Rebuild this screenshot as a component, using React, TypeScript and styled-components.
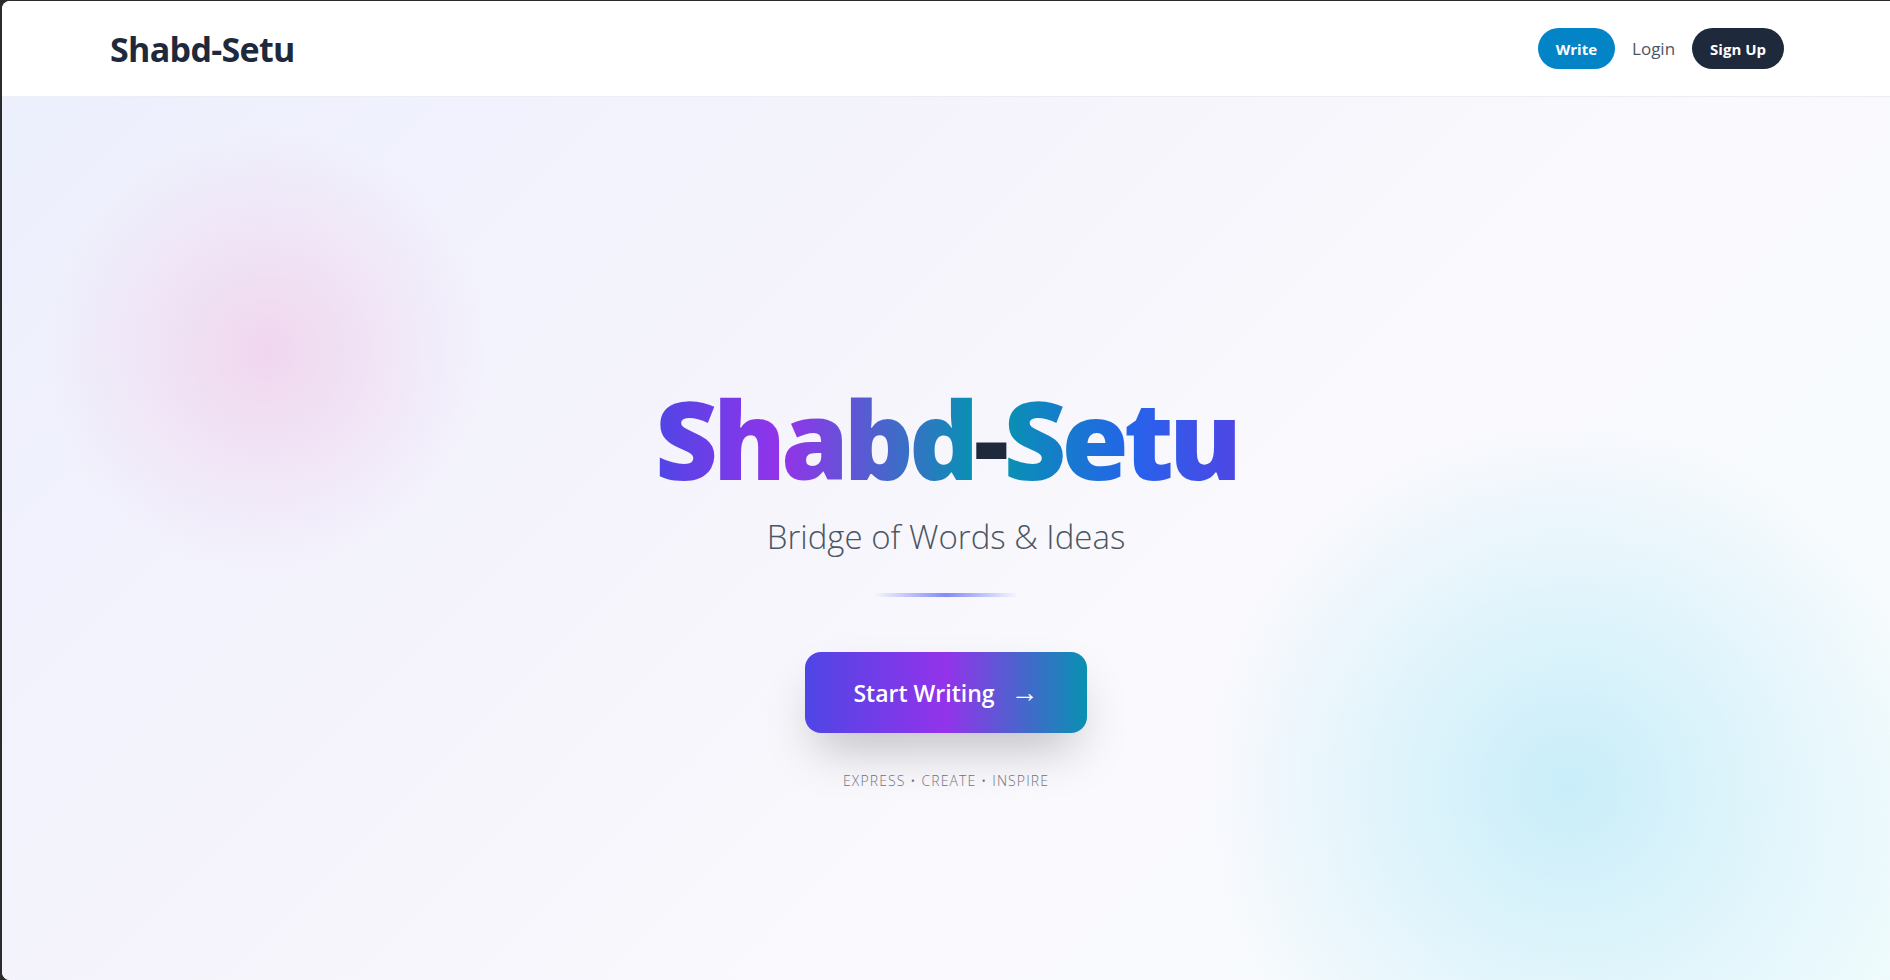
import React from "react";
import styled, { createGlobalStyle } from "styled-components";

const GlobalStyle = createGlobalStyle`
  html, body {
    margin: 0;
    padding: 0;
    height: 100%;
    overflow: hidden;
    background: #2b2b2b;
  }
  body {
    font-family: "Open Sans", "Noto Sans", sans-serif;
  }
  * { box-sizing: border-box; }
`;

const Frame = styled.div`
  margin: 1px 0 0 2px;
  height: 979px;
  border-radius: 8px 0 0 8px;
  overflow: hidden;
  background: #ffffff;
  display: flex;
  flex-direction: column;
`;

const Header = styled.header`
  flex: none;
  height: 96px;
  display: flex;
  align-items: center;
  justify-content: space-between;
  padding: 0 106px 0 108px;
  background: #ffffff;
  border-bottom: 1px solid #eceef3;
  position: relative;
  z-index: 2;
`;

const Logo = styled.div`
  font-family: "Open Sans", sans-serif;
  font-weight: 700;
  font-size: 34px;
  letter-spacing: -0.02em;
  color: #1e293b;
  line-height: 1;
`;

const Nav = styled.nav`
  display: flex;
  align-items: center;
  gap: 17px;
`;

const PillButton = styled.button<{ $bg: string }>`
  height: 41px;
  padding: 0 18px;
  border: none;
  border-radius: 9999px;
  background: ${(p) => p.$bg};
  color: #ffffff;
  font-family: "Open Sans", sans-serif;
  font-weight: 700;
  font-size: 15px;
  cursor: pointer;
`;

const NavLink = styled.a`
  font-family: "Open Sans", sans-serif;
  font-size: 17px;
  font-weight: 400;
  color: #4b5563;
  text-decoration: none;
`;

const Hero = styled.section`
  flex: none;
  position: relative;
  min-height: 980px;
  display: flex;
  flex-direction: column;
  align-items: center;
  justify-content: center;
  overflow: hidden;
  background: linear-gradient(135deg, #eceffc 0%, #f5f4fc 35%, #faf9fd 60%, #f6fbfd 85%, #ecfbfd 100%);
`;

const Blob = styled.div<{ $size: number; $color: string }>`
  position: absolute;
  width: ${(p) => p.$size}px;
  height: ${(p) => p.$size}px;
  border-radius: 50%;
  background: radial-gradient(circle, ${(p) => p.$color} 0%, transparent 68%);
  pointer-events: none;
`;

const Content = styled.div`
  position: relative;
  z-index: 1;
  display: flex;
  flex-direction: column;
  align-items: center;
`;

const Title = styled.h1`
  margin: 0;
  font-family: "Open Sans", sans-serif;
  font-weight: 800;
  font-size: 109px;
  line-height: 1;
  letter-spacing: -0.046em;
`;

const GradientWord = styled.span<{ $stops: string }>`
  background: linear-gradient(90deg, ${(p) => p.$stops});
  -webkit-background-clip: text;
  background-clip: text;
  color: transparent;
`;

const Dash = styled.span`
  color: #1e293b;
`;

const Subtitle = styled.p`
  margin: 25px 0 0;
  font-family: "Open Sans", sans-serif;
  font-weight: 300;
  font-size: 33px;
  line-height: 40px;
  color: #4b5563;
`;

const Divider = styled.div`
  margin-top: 36px;
  width: 144px;
  height: 4px;
  border-radius: 2px;
  background: linear-gradient(90deg, rgba(129, 140, 248, 0) 0%, #818cf8 50%, rgba(129, 140, 248, 0) 100%);
`;

const CTA = styled.button`
  margin-top: 55px;
  height: 81px;
  padding: 0 48px;
  border: none;
  border-radius: 16px;
  display: flex;
  align-items: center;
  gap: 16px;
  background: linear-gradient(90deg, #4f46e5 0%, #9333ea 50%, #0891b2 100%);
  color: #ffffff;
  font-family: "Open Sans", sans-serif;
  font-weight: 600;
  font-size: 23px;
  box-shadow: 0 25px 50px -12px rgba(0, 0, 0, 0.25);
  cursor: pointer;
`;

const Arrow = styled.span`
  font-size: 28px;
  line-height: 1;
  margin-top: -3px;
`;

const Tagline = styled.p`
  margin: 38px 0 0;
  font-family: "Open Sans", sans-serif;
  font-weight: 300;
  font-size: 14px;
  line-height: 20px;
  letter-spacing: 0.08em;
  color: #6b7280;
`;

export default function App() {
  return (
    <>
      <GlobalStyle />
      <Frame>
        <Header>
          <Logo>Shabd-Setu</Logo>
          <Nav>
            <PillButton $bg="#0284c7">Write</PillButton>
            <NavLink href="#">Login</NavLink>
            <PillButton $bg="#1e293b">Sign Up</PillButton>
          </Nav>
        </Header>
        <Hero>
          <Blob $size={460} $color="rgba(240, 208, 236, 0.8)" style={{ left: 35, top: 24 }} />
          <Blob $size={760} $color="rgba(198, 237, 249, 0.95)" style={{ left: 1187, top: 309 }} />
          <Content>
            <Title>
              <GradientWord $stops="#4f46e5 0%, #9333ea 40%, #0891b2 100%">Shabd</GradientWord>
              <Dash>-</Dash>
              <GradientWord $stops="#0891b2 0%, #2563eb 55%, #4f46e5 100%">Setu</GradientWord>
            </Title>
            <Subtitle>Bridge of Words &amp; Ideas</Subtitle>
            <Divider />
            <CTA>
              Start Writing
              <Arrow>→</Arrow>
            </CTA>
            <Tagline>EXPRESS • CREATE • INSPIRE</Tagline>
          </Content>
        </Hero>
      </Frame>
    </>
  );
}
